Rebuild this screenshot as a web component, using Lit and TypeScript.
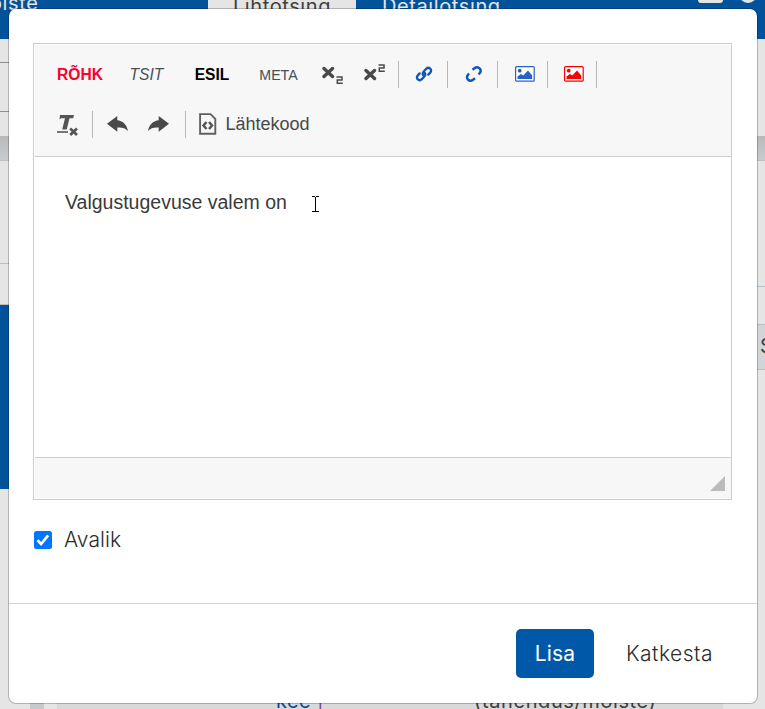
import { LitElement, html, css, svg } from "lit";
import { customElement } from "lit/decorators.js";

const sep = html`<i class="sep"></i>`;

const two = (x: number, y: number) =>
  svg`<path d="M${x} ${y}h5.500v3h-4.700v3.200h5.500" fill="none" stroke="#494949" stroke-width="1.500"/>`;

const subIcon = html`<svg width="22" height="24" viewBox="0 0 22 24">
  <path d="M2 6.500L10.500 14.500M10.500 6.500L2 14.500" stroke="#494949" stroke-width="3.400" stroke-linecap="round" fill="none"/>${two(14.5, 15)}</svg>`;

const supIcon = html`<svg width="22" height="24" viewBox="0 0 22 24">
  <path d="M2 8.500L10.500 16.500M10.500 8.500L2 16.500" stroke="#494949" stroke-width="3.400" stroke-linecap="round" fill="none"/>${two(14.5, 3)}</svg>`;

const linkIcon = html`<svg width="18" height="18" viewBox="0 0 18 18">
  <g fill="none" stroke="#0d55bb" stroke-width="2.300" stroke-linecap="round">
    <path d="M9 10.900c-1.700-1.200-1.700-2.900-.5-4.100l2.700-3c1.300-1.200 2.800-1.200 4-.2s1.200 2.700 0 4l-1.900 2"/>
    <path d="M9 7.100c1.700 1.200 1.700 2.900.5 4.100l-2.700 3c-1.300 1.200-2.800 1.200-4 .2s-1.200-2.700 0-4l1.900-2"/>
  </g></svg>`;

const unlinkIcon = html`<svg width="18" height="18" viewBox="0 0 18 18">
  <g fill="none" stroke="#0d55bb" stroke-width="2.400">
    <path d="M7.500 4.800l1.600-1.300c1.900-1.400 4.200-1.400 5.500-.1s1.300 3.300 0 4.900l-1 1.200"/>
    <path d="M10 13.200l-1.600 1.300c-1.900 1.400-4.200 1.400-5.400.1s-1.300-3.300 0-4.900l1-1.200"/>
  </g></svg>`;

const picture = (c: string) => html`<svg width="20" height="16" viewBox="0 0 20 16">
  <rect x=".6" y=".6" width="18.600" height="14.600" rx="1" fill="#fff" stroke=${c} stroke-width="1.200"/>
  <circle cx="4.700" cy="4.700" r="1.900" fill=${c}/>
  <path d="M2.500 13v-2.500l3.500-2.500 2.200 1.500L13 4.500l4.200 5V13z" fill=${c}/></svg>`;

const clearIcon = html`<svg width="22" height="22" viewBox="0 0 22 22">
  <path d="M3 1h14l-.9 3.300h-3.600L9.700 15.500H5.200L8 4.300H4.200L2.500 5.500z" fill="#555"/>
  <path d="M0 18h11" stroke="#555" stroke-width="1.600"/>
  <path d="M13.200 14.500l6.800 6.500M20 14.500l-6.800 6.500" stroke="#555" stroke-width="2.700"/></svg>`;

const undoPath = svg`<path d="M0 7.800L10.300 0v4.200c5 .4 9.500 4 10.700 10.800-2.600-3-6.200-3.900-10.700-3.500v4.300z" fill="#494949"/>`;

const sourceIcon = html`<svg width="18" height="22" viewBox="0 0 18 22">
  <path d="M1.100 1.100h10.400l4.800 4.700v15H1.100z" fill="none" stroke="#606060" stroke-width="1.900"/>
  <path d="M7.500 9L4.500 12.500l3 3.500M10 9l3 3.500-3 3.500" fill="none" stroke="#555" stroke-width="2.500"/></svg>`;

@customElement("app-root")
export class AppRoot extends LitElement {
  static styles = css`
    :host { display: block; position: relative; width: 765px; height: 709px; overflow: hidden;
      background: #e5e5e5; font-family: Inter, sans-serif; color: #3e3e3e; }
    * { box-sizing: border-box; }
    svg { display: block; flex: none; }
    .page { display: flex; flex-direction: column; height: 709px; }
    .top { height: 39px; background: #00529b; color: #e5e5e5; display: flex; overflow: hidden;
      font-size: 20px; line-height: 24px; letter-spacing: .6px; white-space: nowrap; }
    .top span { margin-top: -6px; }
    .top .brand { width: 208px; text-indent: -10px; margin-top: -9px; }
    .tab { width: 148px; background: #e5e5e5; color: #3e3e3e; text-align: center; display: flex; justify-content: center; }
    .detail { width: 342px; padding-left: 26px; }
    .flag { width: 25px; height: 3px; border-radius: 0 0 3px 3px; background: #e5e5e5; }
    .dot { width: 18px; height: 18px; margin: -15px 0 0 16px; border-radius: 50%; background: #e5e5e5; }
    .sides { flex: 1; display: flex; justify-content: space-between; min-height: 0; }
    .side { width: 9px; display: flex; flex-direction: column; }
    .search { height: 97px; padding-top: 23px; }
    .field { height: 50px; border: solid #8d8d8d; border-width: 1px 0; }
    .band { height: 25px; background: linear-gradient(#b8b9b9, #c8cccf); border-bottom: 1px solid #bdc0c2; }
    .gapA { height: 103px; border-bottom: 1px solid #b2bec8; }
    .gapB { height: 41px; border-bottom: 1px solid #bdbdbd; }
    .blue { height: 184px; background: #00529b; }
    .gapC { height: 126px; border-bottom: 1px solid #b5c0c7; }
    .gapD { height: 38px; border-bottom: 1px solid #b5c0c7; }
    .cell { height: 45px; background: #d1d5d8; border-bottom: 1px solid #b5c0c7; overflow: hidden;
      font-size: 20px; line-height: 43px; padding-left: 4px; }
    .bottom { height: 22px; display: flex; overflow: hidden; white-space: nowrap; font-size: 20px; line-height: 24px; }
    .rail { margin-left: 30px; width: 14px; background: #c6cacd; }
    .result { margin-left: 13px; width: 666px; background: #d9d9d9; display: flex; }
    .word { margin-left: 219px; width: 198px; color: #004b9b; letter-spacing: .4px; padding-top: 2px; }
    .word b { font-weight: 400; color: #80489b; }
    .note { letter-spacing: .6px; padding-top: 2px; }

    .modal { position: absolute; left: 8px; top: 8px; width: 750px; height: 696px; background: #fff; background-clip: padding-box;
      border: 1px solid rgba(0, 0, 0, .22); border-radius: 8px; display: flex; flex-direction: column; }
    .body { height: 594px; padding: 34px 24px 0; }
    .editor { width: 699px; height: 457px; border: 1px solid #ccc; display: flex; flex-direction: column;
      padding: 1px 0 1px 1px; font-family: "Liberation Sans", Arial, sans-serif; }
    .tools { height: 112px; background: #f7f7f7; border-bottom: 1px solid #ccc; padding-top: 5px; }
    .row { display: grid; height: 50px; align-items: center; justify-items: center; white-space: nowrap; }
    .one { grid-template-columns: 90px 43px 88px 45px 64px 19px 29px 22px 25px 28px 19px 35px 11px 42px 3px; margin-top: -1px; }
    .two { grid-template-columns: 28px 21px 28px 54px 0 139px; padding-left: 19px; }
    .sep { width: 1px; height: 27px; background: #b8b8b8; }
    .t { font-size: 15.600px; padding-top: 2px; }
    .bold { font-weight: 700; }
    .red { color: #f8022e; }
    .italic { font-style: italic; color: #465057; }
    .black { color: #000; }
    .meta { font-size: 14.200px; color: #465057; padding-top: 1px; }
    .source { display: flex; align-items: center; gap: 8px; font-size: 18px; color: #484848; }
    .clear { padding-top: 2px; }
    .content { flex: 1; padding: 33px 0 0 30px; font-size: 19.500px; line-height: 24px; color: #3a3a3a; display: flex; align-items: flex-start; }
    .cursor { margin: 6px 0 0 25px; }
    .status { height: 41px; background: #f7f7f7; border-top: 1px solid #ccc; display: flex; justify-content: flex-end; padding: 18px 6px 0 0; }
    .public { display: flex; align-items: center; gap: 12px; margin-top: 26px; height: 28px; font-size: 21px;
      font-weight: 300; letter-spacing: .1px; color: #2c2c2c; padding-left: 1px; }
    .public span { margin-top: -2px; }
    .foot { flex: 1; border-top: 1px solid #ccd3d9; display: flex; padding: 25px 0 0 507px; font-size: 21px; letter-spacing: .2px; }
    .primary { width: 78px; height: 49px; border-radius: 5px; background: #0058a9; color: #fff; text-align: center; line-height: 49px; }
    .cancel { margin-left: 32px; line-height: 49px; font-weight: 300; letter-spacing: .5px; color: #2c2c2c; }
  `;

  render() {
    return html`
      <div class="page">
        <header class="top">
          <span class="brand">oiste</span>
          <div class="tab"><span>Lihtotsing</span></div>
          <span class="detail">Detailotsing</span>
          <i class="flag"></i><i class="dot"></i>
        </header>
        <div class="sides">
          <div class="side">
            <div class="search"><div class="field"></div></div>
            <div class="band"></div><div class="gapA"></div><div class="gapB"></div><div class="blue"></div>
          </div>
          <div class="side">
            <div class="search"></div><div class="band"></div><div class="gapC"></div><div class="gapD"></div>
            <div class="cell">S</div>
          </div>
        </div>
        <div class="bottom">
          <div class="rail"></div>
          <div class="result"><span class="word">kee <b>|</b></span><span class="note">(tähendus/mõiste)</span></div>
        </div>
      </div>
      <section class="modal">
        <div class="body">
          <div class="editor">
            <div class="tools">
              <div class="row one">
                <span class="t bold red">RÕHK</span><span class="t italic">TSIT</span>
                <span class="t bold black">ESIL</span><span class="meta">META</span>
                ${subIcon}${supIcon}${sep}${linkIcon}${sep}${unlinkIcon}${sep}${picture("#2860c4")}${sep}${picture("#fb0000")}${sep}
              </div>
              <div class="row two">
                <span class="clear">${clearIcon}</span>${sep}
                <svg width="21" height="16" viewBox="0 0 21 16">${undoPath}</svg>
                <svg width="21" height="16" viewBox="0 0 21 16"><g transform="translate(21 0) scale(-1 1)">${undoPath}</g></svg>
                ${sep}<span class="source">${sourceIcon}Lähtekood</span>
              </div>
            </div>
            <div class="content">Valgustugevuse valem on
              <svg class="cursor" width="7" height="16" viewBox="0 0 7 16" shape-rendering="crispEdges">
                <path d="M0 0h3v1h1V0h3v1H4v14h3v1H0v-1h3V1H0z" fill="#000"/></svg>
            </div>
            <div class="status"><svg width="15" height="15"><path d="M15 0v15H0z" fill="#bcbcbc"/></svg></div>
          </div>
          <div class="public">
            <svg width="18" height="18" viewBox="0 0 18 18"><rect width="18" height="18" rx="2.500" fill="#0075ff"/>
              <path d="M3.500 9.300l3.600 3.700 7-8.600" fill="none" stroke="#fff" stroke-width="2.700"/></svg>
            <span>Avalik</span>
          </div>
        </div>
        <div class="foot"><span class="primary">Lisa</span><span class="cancel">Katkesta</span></div>
      </section>`;
  }
}
